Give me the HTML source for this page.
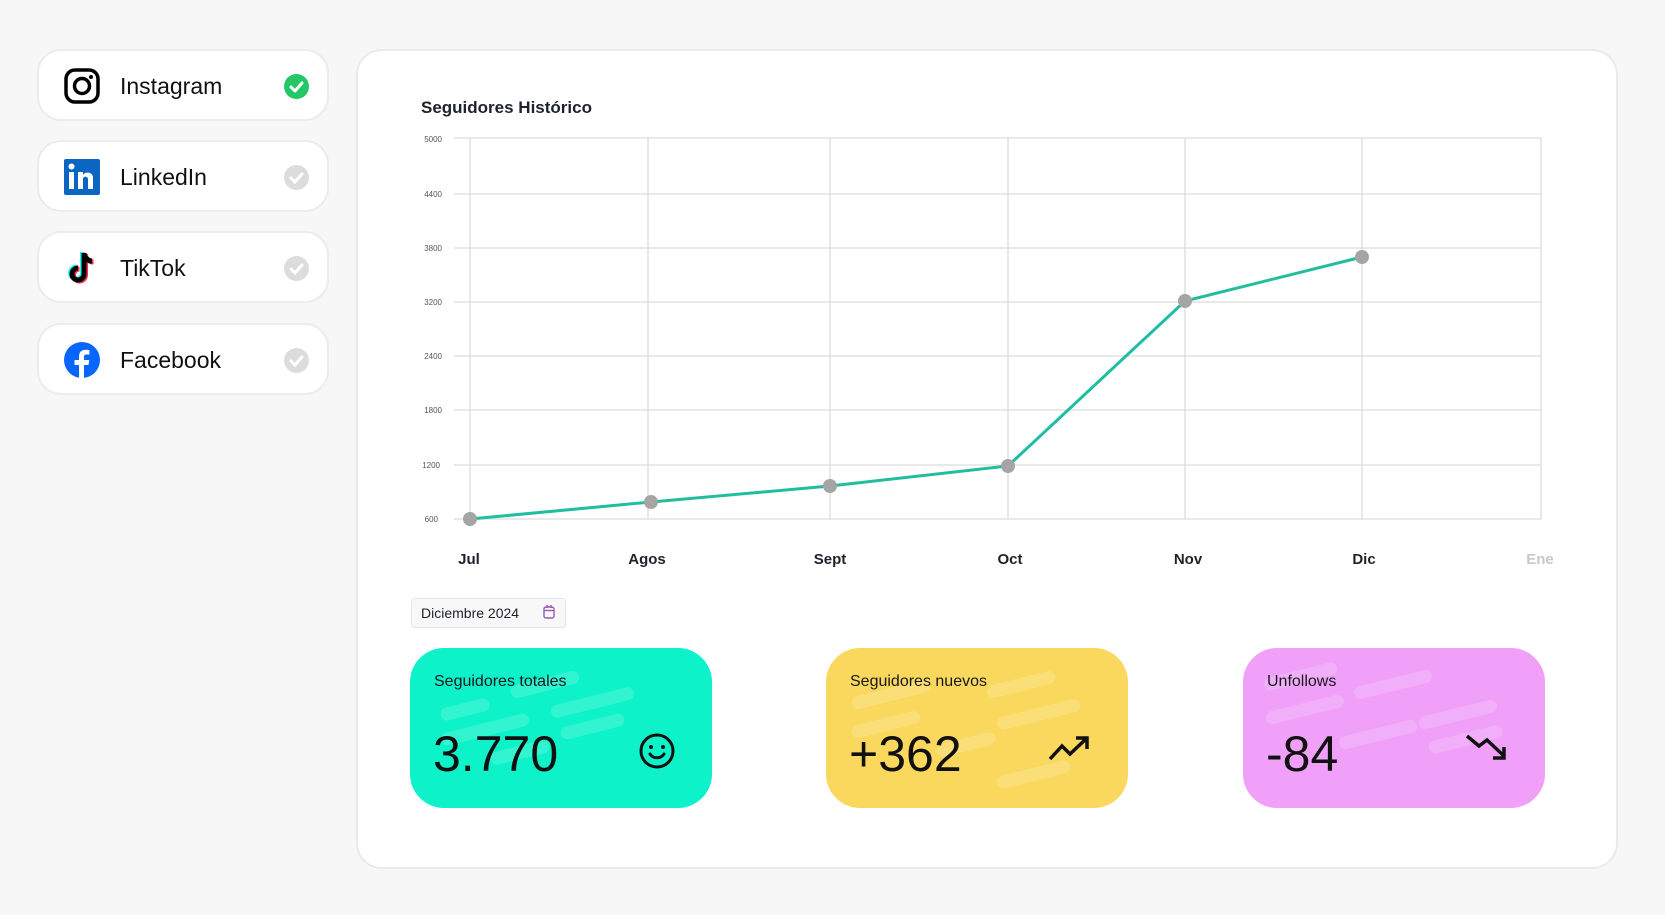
<!DOCTYPE html>
<html><head><meta charset="utf-8"><style>
*{margin:0;padding:0;box-sizing:border-box}
body{width:1665px;height:915px;background:#f6f7f6;font-family:"Liberation Sans",sans-serif;color:#16181d;position:relative;overflow:hidden}
.net{position:absolute;left:37px;width:292px;height:72px;background:#fff;border:2px solid #ececec;border-radius:24px}
.net .ic{position:absolute;left:25px;top:17px;width:36px;height:36px}
.net .t{position:absolute;left:81px;top:20px;font-size:23px;line-height:30px;color:#111}
.net .ck{position:absolute;left:245px;top:23px;width:25px;height:25px;border-radius:50%;background:#dcdcdc}
.net .ck.on{background:#23c765}
.main{position:absolute;left:356px;top:49px;width:1262px;height:820px;background:#fff;border:2px solid #eaeaea;border-radius:26px}
.stat{position:absolute;top:648px;width:302px;height:160px;border-radius:34px;overflow:hidden}
.stat .l{position:absolute;left:24px;top:25px;font-size:16px;color:#16181d}
.stat .n{position:absolute;left:23px;top:78px;font-size:50px;line-height:56px;color:#111}
.stat .s{position:absolute;height:13px;border-radius:7px;background:rgba(255,255,255,.16);transform:rotate(-14deg)}
.stat svg{position:absolute}
</style></head><body>
<div class="net" style="top:49px"><svg class="ic" viewBox="0 0 36 36"><rect x="2" y="2" width="32" height="32" rx="9" fill="none" stroke="#000" stroke-width="3.5"/><circle cx="18" cy="18" r="7.5" fill="none" stroke="#000" stroke-width="3.5"/><circle cx="27" cy="9" r="2" fill="#000"/></svg><div class="t">Instagram</div><div class="ck on"><svg viewBox="0 0 25 25" width="25" height="25"><path d="M7 13l4 4 7-8" fill="none" stroke="#fff" stroke-width="3" stroke-linecap="round" stroke-linejoin="round"/></svg></div></div>
<div class="net" style="top:140px"><svg class="ic" viewBox="0 0 36 36"><rect width="36" height="36" rx="2" fill="#0a66c2"/><rect x="5" y="13" width="5" height="17" fill="#fff"/><circle cx="7.5" cy="7.5" r="3" fill="#fff"/><path d="M14 13h5v3c1.5-3 9-4 10 2v12h-5V20c0-3-5-3-5 0v10h-5z" fill="#fff"/></svg><div class="t">LinkedIn</div><div class="ck"><svg viewBox="0 0 25 25" width="25" height="25"><path d="M7 13l4 4 7-8" fill="none" stroke="#fff" stroke-width="3" stroke-linecap="round"/></svg></div></div>
<div class="net" style="top:231px"><svg class="ic" viewBox="0 0 36 36"><path d="M20 3v21a6 6 0 1 1-6-6" fill="none" stroke="#25f4ee" stroke-width="5" transform="translate(-1.5,-1)"/><path d="M20 3c0 5 4 8 8 8" fill="none" stroke="#25f4ee" stroke-width="5" transform="translate(-1.5,-1)"/><path d="M20 3v21a6 6 0 1 1-6-6" fill="none" stroke="#fe2c55" stroke-width="5" transform="translate(1.5,1)"/><path d="M20 3c0 5 4 8 8 8" fill="none" stroke="#fe2c55" stroke-width="5" transform="translate(1.5,1)"/><path d="M20 3v21a6 6 0 1 1-6-6" fill="none" stroke="#000" stroke-width="5"/><path d="M20 3c0 5 4 8 8 8" fill="none" stroke="#000" stroke-width="5"/></svg><div class="t">TikTok</div><div class="ck"><svg viewBox="0 0 25 25" width="25" height="25"><path d="M7 13l4 4 7-8" fill="none" stroke="#fff" stroke-width="3" stroke-linecap="round"/></svg></div></div>
<div class="net" style="top:323px"><svg class="ic" viewBox="0 0 36 36"><circle cx="18" cy="18" r="18" fill="#0866ff"/><path d="M20 36V23h4.5l.7-5H20v-3c0-1.5.5-2.5 2.6-2.5h2.8V8c-.6-.1-2-.3-3.8-.3-4 0-6.6 2.4-6.6 6.8V18h-4.5v5H15v13z" fill="#fff"/></svg><div class="t">Facebook</div><div class="ck"><svg viewBox="0 0 25 25" width="25" height="25"><path d="M7 13l4 4 7-8" fill="none" stroke="#fff" stroke-width="3" stroke-linecap="round"/></svg></div></div>

<div class="main"></div>
<svg style="position:absolute;left:0;top:0" width="1665" height="915">
<text x="421" y="113" font-size="17" font-weight="bold" fill="#1d222b" font-family="Liberation Sans">Seguidores Histórico</text>
<g stroke="#dcdcdc" stroke-width="1.3">
<line x1="454" y1="138" x2="1541" y2="138"/><line x1="454" y1="194" x2="1541" y2="194"/><line x1="454" y1="248" x2="1541" y2="248"/><line x1="454" y1="302" x2="1541" y2="302"/><line x1="454" y1="356" x2="1541" y2="356"/><line x1="454" y1="410" x2="1541" y2="410"/><line x1="454" y1="465" x2="1541" y2="465"/><line x1="454" y1="519" x2="1541" y2="519"/>
<line x1="470" y1="138" x2="470" y2="519"/><line x1="648" y1="138" x2="648" y2="519"/><line x1="830" y1="138" x2="830" y2="519"/><line x1="1008" y1="138" x2="1008" y2="519"/><line x1="1185" y1="138" x2="1185" y2="519"/><line x1="1362" y1="138" x2="1362" y2="519"/><line x1="1541" y1="138" x2="1541" y2="519"/>
</g>
<g font-size="8" fill="#555" font-family="Liberation Sans" text-anchor="end">
<text x="442" y="142">5000</text><text x="442" y="197">4400</text><text x="442" y="251">3800</text><text x="442" y="305">3200</text><text x="442" y="359">2400</text><text x="442" y="413">1800</text><text x="440" y="468">1200</text><text x="438" y="522">600</text></g>
<polyline points="470,519 651,502 830,486 1008,466 1185,301 1362,257" fill="none" stroke="#22bd9e" stroke-width="3"/>
<g fill="#a5a5a5"><circle cx="470" cy="519" r="7"/><circle cx="651" cy="502" r="7"/><circle cx="830" cy="486" r="7"/><circle cx="1008" cy="466" r="7"/><circle cx="1185" cy="301" r="7"/><circle cx="1362" cy="257" r="7"/></g>
<g font-size="15" font-weight="bold" fill="#1d222b" font-family="Liberation Sans" text-anchor="middle">
<text x="469" y="564">Jul</text><text x="647" y="564">Agos</text><text x="830" y="564">Sept</text><text x="1010" y="564">Oct</text><text x="1188" y="564">Nov</text><text x="1364" y="564">Dic</text><text x="1540" y="564" fill="#c8c8c8">Ene</text></g>
<rect x="411.5" y="598.5" width="154" height="29" rx="3" fill="#f7f8f7" stroke="#e6e6e6"/>
<text x="421" y="618" font-size="14" fill="#1d222b" font-family="Liberation Sans">Diciembre 2024</text>
<g fill="none" stroke="#9b59b6" stroke-width="1.4"><rect x="544" y="607" width="10" height="11" rx="2"/><line x1="544" y1="610.5" x2="554" y2="610.5"/><line x1="547" y1="605" x2="547" y2="608"/><line x1="551" y1="605" x2="551" y2="608"/></g>
</svg>

<div class="stat" style="left:410px;background:#0df2c9">
<div class="s" style="left:30px;top:55px;width:50px"></div><div class="s" style="left:100px;top:30px;width:70px"></div><div class="s" style="left:30px;top:75px;width:90px"></div><div class="s" style="left:140px;top:48px;width:85px"></div><div class="s" style="left:150px;top:72px;width:65px"></div><div class="s" style="left:80px;top:98px;width:60px"></div>
<div class="l">Seguidores totales</div><div class="n">3.770</div>
<svg style="left:228px;top:84px" width="38" height="38" viewBox="0 0 38 38"><circle cx="19" cy="19" r="16" fill="none" stroke="#111" stroke-width="3"/><circle cx="13" cy="15" r="2" fill="#111"/><circle cx="25" cy="15" r="2" fill="#111"/><path d="M12 22c3 5 11 5 14 0" fill="none" stroke="#111" stroke-width="3" stroke-linecap="round"/></svg></div>

<div class="stat" style="left:826px;background:#f9d85d">
<div class="s" style="left:25px;top:40px;width:80px"></div><div class="s" style="left:160px;top:30px;width:70px"></div><div class="s" style="left:25px;top:70px;width:70px"></div><div class="s" style="left:170px;top:60px;width:85px"></div><div class="s" style="left:110px;top:90px;width:60px"></div><div class="s" style="left:170px;top:120px;width:75px"></div>
<div class="l">Seguidores nuevos</div><div class="n">+362</div>
<svg style="left:222px;top:86px" width="44" height="30" viewBox="0 0 44 30"><path d="M2 25l12-13 8 8 17-16M28 4h11v11" fill="none" stroke="#111" stroke-width="3.5" stroke-linejoin="miter"/></svg></div>

<div class="stat" style="left:1243px;background:#f0a0f8">
<div class="s" style="left:20px;top:22px;width:75px"></div><div class="s" style="left:110px;top:30px;width:80px"></div><div class="s" style="left:22px;top:55px;width:80px"></div><div class="s" style="left:175px;top:60px;width:80px"></div><div class="s" style="left:95px;top:80px;width:80px"></div><div class="s" style="left:185px;top:85px;width:75px"></div>
<div class="l">Unfollows</div><div class="n">-84</div>
<svg style="left:222px;top:84px" width="44" height="30" viewBox="0 0 44 30"><path d="M2 4l12 10 8-6 17 16M28 26h11V15" fill="none" stroke="#111" stroke-width="3.5"/></svg></div>
</body></html>
